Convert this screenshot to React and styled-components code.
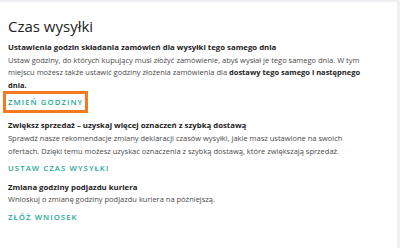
import React from 'react';
import styled, { createGlobalStyle } from 'styled-components';

const GlobalStyle = createGlobalStyle`
  html, body {
    margin: 0;
    padding: 0;
    background: #eef0f3;
  }
  body {
    font-family: "Open Sans", "Noto Sans", sans-serif;
  }
`;

const Card = styled.div`
  width: 397px;
  height: 246px;
  margin-top: 2px;
  background: #ffffff;
  box-sizing: border-box;
  padding: 14px 8px 0 8px;
  overflow: hidden;
`;

const Heading = styled.h1`
  margin: 0 0 5px 0;
  font-size: 15px;
  line-height: 20px;
  font-weight: 400;
  color: #222222;
`;

const Section = styled.section`
  display: flex;
  flex-direction: column;
  align-items: flex-start;
  margin-bottom: ${p => p.$gap ?? 10}px;
`;

const Title = styled.h2`
  margin: 0;
  font-size: 7.8px;
  line-height: 12.6px;
  font-weight: 700;
  color: #222222;
  white-space: nowrap;
`;

const Body = styled.p`
  margin: 0;
  font-size: 7.5px;
  line-height: 12.6px;
  color: #4a4a4a;
  white-space: nowrap;

  b {
    font-weight: 700;
    color: #222222;
  }
`;

const Action = styled.a`
  display: block;
  margin-top: 5px;
  font-size: 7.8px;
  line-height: 12px;
  font-weight: 600;
  letter-spacing: 1.05px;
  text-transform: uppercase;
  color: #1ea796;
  text-decoration: none;
  cursor: pointer;
  outline: ${p => (p.$highlighted ? '3px solid #f47a22' : 'none')};
  outline-offset: 2px;
`;

const sections = [
  {
    title: 'Ustawienia godzin składania zamówień dla wysyłki tego samego dnia',
    body: (
      <>
        Ustaw godziny, do których kupujący musi złożyć zamówienie, abyś wysłał je tego samego dnia. W tym
        <br />
        miejscu możesz także ustawić godziny złożenia zamówienia dla <b>dostawy tego samego i następnego</b>
        <br />
        <b>dnia.</b>
      </>
    ),
    action: 'Zmień godziny',
    highlighted: true,
    gap: 11,
  },
  {
    title: 'Zwiększ sprzedaż – uzyskaj więcej oznaczeń z szybką dostawą',
    body: (
      <>
        Sprawdź nasze rekomendacje zmiany deklaracji czasów wysyłki, jakie masz ustawione na swoich
        <br />
        ofertach. Dzięki temu możesz uzyskać oznaczenia z szybką dostawą, które zwiększają sprzedaż.
      </>
    ),
    action: 'Ustaw czas wysyłki',
    gap: 6.5,
  },
  {
    title: 'Zmiana godziny podjazdu kuriera',
    body: <>Wnioskuj o zmianę godziny podjazdu kuriera na późniejszą.</>,
    action: 'Złóż wniosek',
    gap: 0,
  },
];

const App = () => (
  <>
    <GlobalStyle />
    <Card>
      <Heading>Czas wysyłki</Heading>
      {sections.map(s => (
        <Section key={s.title} $gap={s.gap}>
          <Title>{s.title}</Title>
          <Body>{s.body}</Body>
          <Action $highlighted={s.highlighted}>{s.action}</Action>
        </Section>
      ))}
    </Card>
  </>
);

export default App;
